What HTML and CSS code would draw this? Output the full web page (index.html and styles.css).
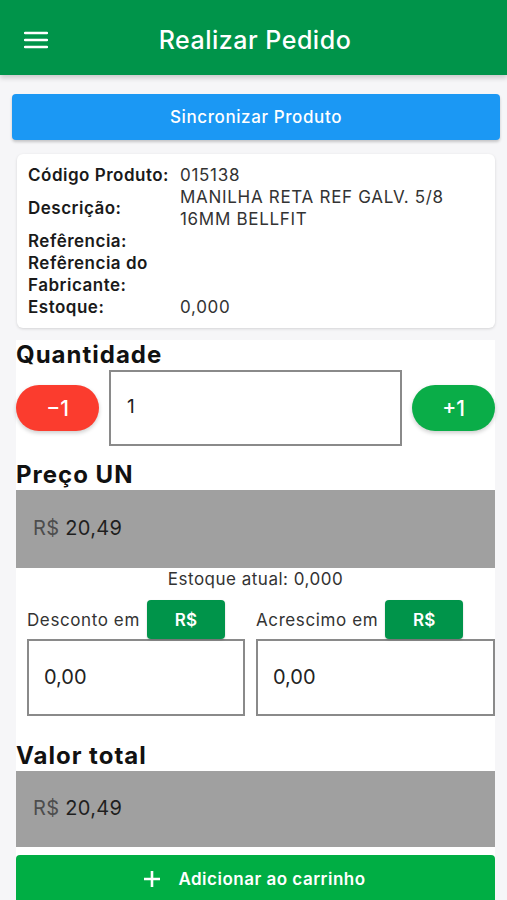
FILE: index.html
```html
<!DOCTYPE html>
<html lang="pt-BR">
<head>
  <meta charset="UTF-8" />
  <meta name="viewport" content="width=device-width, initial-scale=1.0" />
  <title>Realizar Pedido</title>
  <link rel="stylesheet" href="styles.css">
</head>
<body>
  <header class="topbar">
    <button class="menu-btn" aria-label="Menu">
      <svg width="24" height="18" viewBox="0 0 24 18">
        <path d="M1 2h22M1 9h22M1 16h22" stroke="#fff" stroke-width="2.4" stroke-linecap="round" />
      </svg>
    </button>
    <h1>Realizar Pedido</h1>
  </header>

  <main class="content">
    <button class="sync-btn">Sincronizar Produto</button>

    <div class="product-card">
      <span class="lbl">Código Produto:</span><span class="val">015138</span>
      <span class="lbl">Descrição:</span><span class="val">MANILHA RETA REF GALV. 5/8 16MM BELLFIT</span>
      <span class="lbl">Refêrencia:</span><span class="val"></span>
      <span class="lbl">Refêrencia do Fabricante:</span><span class="val"></span>
      <span class="lbl">Estoque:</span><span class="val">0,000</span>
    </div>

    <section class="order">
      <h2>Quantidade</h2>
      <div class="qty-row">
        <button class="pill minus">−1</button>
        <div class="field qty-field">1</div>
        <button class="pill plus">+1</button>
      </div>

      <h2 class="gap-top">Preço UN</h2>
      <div class="money-box"><span class="cur">R$</span> 20,49</div>
      <p class="stock">Estoque atual: 0,000</p>

      <div class="adjust-row">
        <div class="adjust">
          <div class="adjust-head">
            <span>Desconto em</span>
            <button class="cur-btn">R$</button>
          </div>
          <div class="field">0,00</div>
        </div>
        <div class="adjust">
          <div class="adjust-head">
            <span>Acrescimo em</span>
            <button class="cur-btn">R$</button>
          </div>
          <div class="field">0,00</div>
        </div>
      </div>

      <h2 class="gap-top2">Valor total</h2>
      <div class="money-box total">
        <span class="cur">R$</span> 20,49
      </div>

      <button class="add-btn">
        <svg width="18" height="18" viewBox="0 0 18 18">
          <path d="M9 1v16M1 9h16" stroke="#fff" stroke-width="2.6" />
        </svg>
        Adicionar ao carrinho
      </button>
    </section>
  </main>
</body>
</html>
```

FILE: styles.css
```css
* { box-sizing: border-box; }

body {
  font-family: 'Inter', 'Roboto', sans-serif;
  background: #f6f6f8;
  margin: 0;
  color: #1a1a1a;
  height: 900px;
  overflow: hidden;
}

button {
  font-family: inherit;
  border: none;
  cursor: pointer;
}

.topbar {
  height: 75px;
  background: #00944a;
  display: flex;
  align-items: center;
  padding: 0 24px;
  box-shadow: 0 3px 5px rgba(0, 0, 0, 0.18);
}

.menu-btn {
  background: none;
  padding: 0;
  width: 26px;
  height: 24px;
  display: flex;
  align-items: center;
  margin-top: 4px;
}

.topbar h1 {
  flex: 1;
  margin: 4px 26px 0 0;
  padding-left: 3px;
  text-align: center;
  color: #fff;
  font-size: 25px;
  font-weight: 500;
  letter-spacing: 0.5px;
}

.content {
  padding: 19px 7px 0 12px;
}

.sync-btn {
  display: block;
  width: 100%;
  height: 46px;
  background: #1b98f4;
  color: #fff;
  font-size: 17px;
  font-weight: 500;
  letter-spacing: 0.6px;
  border-radius: 4px;
  box-shadow: 0 2px 3px rgba(0, 0, 0, 0.2);
}

.product-card {
  margin: 14px 5px 0 5px;
  background: #fff;
  border-radius: 6px;
  box-shadow: 0 1px 3px rgba(0, 0, 0, 0.14);
  padding: 10px 10px 10px 11px;
  display: grid;
  grid-template-columns: 152px 1fr;
  align-items: center;
  line-height: 22px;
  font-size: 17px;
}

.lbl {
  font-weight: 600;
  color: #1a1a1a;
  letter-spacing: 0.5px;
}

.val {
  color: #333;
  letter-spacing: 0.7px;
}

.order {
  background: #fff;
  margin: 12px 5px 0 4px;
}

.order h2 {
  margin: 0;
  font-size: 24px;
  font-weight: 700;
  line-height: 30px;
  letter-spacing: 1px;
  color: #111;
}

.qty-row {
  display: flex;
  align-items: center;
  justify-content: space-between;
}

.pill {
  width: 83px;
  height: 46px;
  border-radius: 23px;
  color: #fff;
  font-size: 21px;
  font-weight: 500;
  box-shadow: 0 2px 4px rgba(0, 0, 0, 0.2);
}

.minus { background: #fb3c2e; }
.plus { background: #0aad48; }

.field {
  border: 2px solid #8a8a8a;
  background: #fff;
  font-size: 20px;
  color: #222;
  padding: 0 15px;
  height: 76px;
  display: flex;
  align-items: center;
}

.qty-field {
  width: 293px;
  font-size: 19px;
  padding: 0 16px 4px;
}

.gap-top { margin-top: 14px !important; }
.gap-top2 { margin-top: 25px !important; }

.money-box {
  background: #a0a0a0;
  height: 78px;
  display: flex;
  align-items: center;
  padding: 0 17px 2px;
  font-size: 20px;
  letter-spacing: 0.3px;
  color: #1f1f1f;
  white-space: pre;
}

.money-box.total {
  height: 76px;
  white-space: normal;
  gap: 6px;
}

.cur { color: #4d4d4d; }

.stock {
  margin: 0;
  text-align: center;
  font-size: 17px;
  letter-spacing: 0.5px;
  color: #333;
  line-height: 22px;
}

.adjust-row {
  display: flex;
  gap: 11px;
  margin-top: 10px;
  padding-left: 11px;
}

.adjust { flex: 218; }
.adjust:last-child { flex: 239; }

.adjust-head {
  display: flex;
  align-items: center;
  gap: 7px;
  font-size: 17px;
  letter-spacing: 0.6px;
  color: #333;
}

.cur-btn {
  width: 78px;
  height: 39px;
  background: #00944a;
  color: #fff;
  font-size: 17px;
  font-weight: 600;
  border-radius: 4px;
  box-shadow: 0 1px 2px rgba(0, 0, 0, 0.2);
}

.adjust .field {
  height: 77px;
  padding-bottom: 2px;
}

.add-btn {
  margin-top: 8px;
  width: 100%;
  height: 50px;
  background: #00ae44;
  color: #fff;
  font-size: 17px;
  font-weight: 600;
  letter-spacing: 0.5px;
  border-radius: 4px;
  display: flex;
  align-items: center;
  justify-content: center;
  gap: 17px;
  padding-bottom: 4px;
  padding-right: 8px;
}
```
